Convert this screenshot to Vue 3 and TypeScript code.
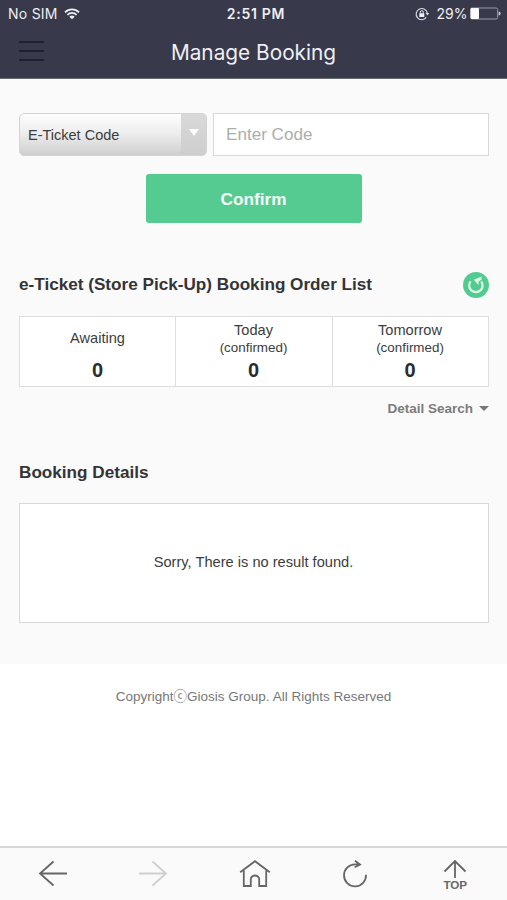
<script setup lang="ts">
import { ref } from 'vue'

interface Counter {
  label: string
  note?: string
  count: number
}

const code = ref('')
const counters: Counter[] = [
  { label: 'Awaiting', count: 0 },
  { label: 'Today', note: '(confirmed)', count: 0 },
  { label: 'Tomorrow', note: '(confirmed)', count: 0 },
]
</script>

<template>
  <div class="screen">
    <header class="header">
      <div class="status">
        <div class="carrier">
          <span>No SIM</span>
          <svg class="wifi" width="16" height="12" viewBox="0 0 16 12">
            <path d="M1 4.3A10 10 0 0 1 15 4.3M3.4 6.8A6.6 6.6 0 0 1 12.6 6.8" fill="none" stroke="#eeeef4" stroke-width="1.8" />
            <path d="M8 11.3 5.3 8.7A3.9 3.9 0 0 1 10.7 8.7Z" fill="#eeeef4" />
          </svg>
        </div>
        <span class="time">2:51 PM</span>
        <div class="power">
          <svg width="15" height="14" viewBox="0 0 15 14">
            <path d="M11.3 10.4A5.6 5.6 0 1 1 12.3 6.3" fill="none" stroke="#dcdce6" stroke-width="1.1" />
            <path d="M10.6 6h3.6l-1.8 2.5z" fill="#dcdce6" />
            <rect x="4.3" y="6.2" width="5" height="3.9" rx=".5" fill="#eeeef4" />
            <path d="M5.3 6.4V5.2a1.5 1.5 0 0 1 3 0v1.2" fill="none" stroke="#eeeef4" stroke-width="1" />
          </svg>
          <span class="percent">29%</span>
          <svg width="31" height="13" viewBox="0 0 31 13">
            <rect x=".6" y="1" width="27" height="11" rx="1.5" fill="none" stroke="#a5a5b0" stroke-width=".9" />
            <rect x=".6" y="1" width="8.4" height="11" rx="1" fill="#fff" />
            <path d="M28.6 4.5v4a2 2 0 0 0 0-4" fill="#c8c8d0" />
          </svg>
        </div>
      </div>
      <div class="titlebar">
        <button class="menu" aria-label="Menu"><i></i><i></i><i></i></button>
        <h1>Manage Booking</h1>
      </div>
    </header>

    <main class="content">
      <div class="lookup">
        <button class="select">
          <span class="select-label">E-Ticket Code</span>
          <span class="select-arrow"><i></i></span>
        </button>
        <input v-model="code" class="code" type="text" placeholder="Enter Code" />
      </div>
      <button class="confirm">Confirm</button>

      <div class="list-head">
        <h2>e-Ticket (Store Pick-Up) Booking Order List</h2>
        <button class="reload" aria-label="Reload">
          <svg width="26" height="26" viewBox="0 0 26 26">
            <circle cx="13" cy="13" r="13" fill="#53cb90" />
            <path d="M7.6 9.4A6.7 6.7 0 1 0 18.2 9.4" fill="none" stroke="#d9f7e7" stroke-width="2.3" />
            <path d="M18.6 4.4 10.8 7.8 15.6 13.2 15.6 9.6 18.6 7.8Z" fill="#d9f7e7" />
          </svg>
        </button>
      </div>

      <div class="counters">
        <div v-for="c in counters" :key="c.label" class="counter">
          <span class="label">{{ c.label }}</span>
          <span v-if="c.note" class="note">{{ c.note }}</span>
          <strong>{{ c.count }}</strong>
        </div>
      </div>
      <button class="detail">Detail Search<i></i></button>

      <h2 class="details-title">Booking Details</h2>
      <div class="empty">Sorry, There is no result found.</div>
    </main>

    <footer class="copyright">Copyrightⓒ<span>Giosis Group. All Rights Reserved</span></footer>

    <nav class="toolbar">
      <button aria-label="Back">
        <svg width="30" height="30" viewBox="0 0 30 30"><path d="M29 14.5H2M15.5 2.5 2 14.5 15.5 26.5" /></svg>
      </button>
      <button aria-label="Forward" class="off">
        <svg width="30" height="30" viewBox="0 0 30 30"><path d="M1 14.5H28M14.5 2.5 28 14.5 14.5 26.5" /></svg>
      </button>
      <button aria-label="Home" class="home">
        <svg width="32" height="30" viewBox="0 0 32 30"><path d="M1.2 13.2 16 2.2 30.8 13.2M4.8 11.5V27H11.8V20Q12 17 16 16.5 20 17 20.2 20V27H27.2V11.5" /></svg>
      </button>
      <button aria-label="Refresh">
        <svg width="28" height="30" viewBox="0 0 28 30"><path d="M18.5 5.4H14A11 11 0 1 0 25 15.8M14 1.8 19 5.6 13.6 8.2" /></svg>
      </button>
      <button aria-label="Top" class="top">
        <svg width="24" height="20" viewBox="0 0 24 20"><path d="M12 19V2M1.5 12.5 12 2 22.5 12.5" /></svg>
        <span>TOP</span>
      </button>
    </nav>
  </div>
</template>

<style>
body {
  margin: 0;
  background: #fff;
}
</style>

<style scoped>
* {
  box-sizing: border-box;
}
.screen {
  width: 100%;
  height: 900px;
  display: flex;
  flex-direction: column;
  overflow: hidden;
  background: #fff;
  color: #3c3c3e;
  font-family: "Liberation Sans", "Noto Sans CJK KR", sans-serif;
}
button {
  border: 0;
  padding: 0;
  background: none;
  font-family: inherit;
  color: inherit;
}
h1,
h2 {
  margin: 0;
}
.header {
  height: 79px;
  background: #38394a;
  border-bottom: 1px solid #6c6c77;
  color: #eeeef4;
  font-family: Inter, sans-serif;
}
.status {
  height: 27px;
  display: grid;
  grid-template-columns: 1fr auto 1fr;
  align-items: center;
  padding: 0 6px 0 8px;
  font-size: 14px;
}
.carrier,
.power {
  display: flex;
  align-items: center;
}
.carrier {
  letter-spacing: 0.25px;
}
.wifi {
  margin-left: 6px;
}
.time {
  font-weight: 600;
  letter-spacing: 0.7px;
  padding-left: 3px;
}
.power {
  justify-content: flex-end;
}
.percent {
  margin: 0 2.5px 0 7px;
}
.titlebar {
  height: 48px;
  display: grid;
  grid-template-columns: 60px 1fr 60px;
  align-items: center;
}
.menu {
  display: flex;
  flex-direction: column;
  gap: 7px;
  margin-left: 19px;
  width: 25px;
}
.menu i {
  height: 2px;
  background: #20202f;
}
h1 {
  font-size: 20.8px;
  font-weight: 400;
  text-align: center;
  line-height: 26px;
  padding-top: 3px;
}
.content {
  height: 585px;
  padding: 34px 18px 0 19px;
  background: #fafafa;
  display: flex;
  flex-direction: column;
}
.lookup {
  display: flex;
  gap: 6px;
  height: 43px;
}
.select {
  width: 188px;
  display: flex;
  border: 1px solid #d3d3d3;
  border-radius: 5px;
  overflow: hidden;
  background: linear-gradient(#fdfdfd, #eee 45%, #cfcfcf);
}
.select-label {
  flex: 1;
  align-self: center;
  padding-left: 8px;
  text-align: left;
  font-size: 14.5px;
}
.select-arrow {
  width: 25px;
  align-self: stretch;
  background: linear-gradient(#d9d9d9, #cecece);
  display: flex;
  justify-content: center;
  padding-top: 15px;
}
.select-arrow i {
  width: 0;
  height: 0;
  border: 5px solid transparent;
  border-top: 7px solid #fff;
  border-bottom: 0;
}
.code {
  flex: 1;
  min-width: 0;
  border: 1px solid #d8d8d8;
  border-radius: 0;
  background: #fff;
  padding: 0 12px;
  font-family: inherit;
  font-size: 17.1px;
  outline: none;
}
.code::placeholder {
  color: #adadad;
}
.confirm {
  align-self: center;
  width: 216px;
  height: 49px;
  margin: 18px 1px 0 0;
  padding-top: 1px;
  border-radius: 3px;
  background: #55cb92;
  color: #f3fff9;
  font-size: 17.2px;
  font-weight: 700;
}
.list-head {
  display: flex;
  justify-content: space-between;
  align-items: center;
  height: 26px;
  margin-top: 49px;
}
h2 {
  font-size: 17.15px;
  line-height: 24px;
  padding-bottom: 2px;
  white-space: nowrap;
  color: #343436;
}
.reload {
  width: 26px;
  height: 26px;
}
.reload svg {
  display: block;
}
.counters {
  display: grid;
  grid-template-columns: 155px 157px 156px;
  height: 71px;
  margin-top: 18px;
  border: 1px solid #dedede;
  background: #fff;
}
.counter {
  display: flex;
  flex-direction: column;
  align-items: center;
  justify-content: flex-end;
  padding-bottom: 4px;
}
.counter + .counter {
  border-left: 1px solid #dedede;
  padding-right: 1px;
}
.label {
  font-size: 14.6px;
  line-height: 18px;
}
.counter:first-child .label {
  margin-bottom: 12px;
}
.note {
  font-size: 13.4px;
  line-height: 18px;
  margin-bottom: 2px;
}
.counter strong {
  font-size: 20px;
  line-height: 23px;
  color: #2c2c2e;
}
.detail {
  align-self: flex-end;
  display: flex;
  align-items: center;
  gap: 6px;
  height: 20px;
  margin-top: 11px;
  color: #7c7c7c;
  font-size: 13.5px;
  font-weight: 700;
}
.detail i {
  border: 5px solid transparent;
  border-top: 5px solid #777;
  border-bottom: 0;
}
.details-title {
  margin-top: 42px;
}
.empty {
  height: 120px;
  margin-top: 17px;
  border: 1px solid #d8d8d8;
  background: #fff;
  display: flex;
  align-items: center;
  justify-content: center;
  font-size: 14.65px;
  padding: 0 1px 3px 0;
}
.copyright {
  flex: 1;
  padding-top: 23px;
  text-align: center;
  font-size: 13.5px;
  line-height: 20px;
  color: #777;
}
.toolbar {
  height: 54px;
  border-top: 2px solid #d6d6d6;
  background: #fafafa;
  display: grid;
  grid-template-columns: repeat(5, 100.6px);
  justify-content: center;
  padding-left: 1px;
}
.toolbar button {
  display: flex;
  align-items: center;
  justify-content: center;
}
.toolbar .home {
  padding-left: 2px;
}
.toolbar path {
  fill: none;
  stroke: #666;
  stroke-width: 1.8;
}
.toolbar .off path {
  stroke: #cfcfcf;
}
.toolbar .top {
  flex-direction: column;
  color: #666;
  font-size: 11.6px;
  font-weight: 700;
  line-height: 11px;
}
</style>
